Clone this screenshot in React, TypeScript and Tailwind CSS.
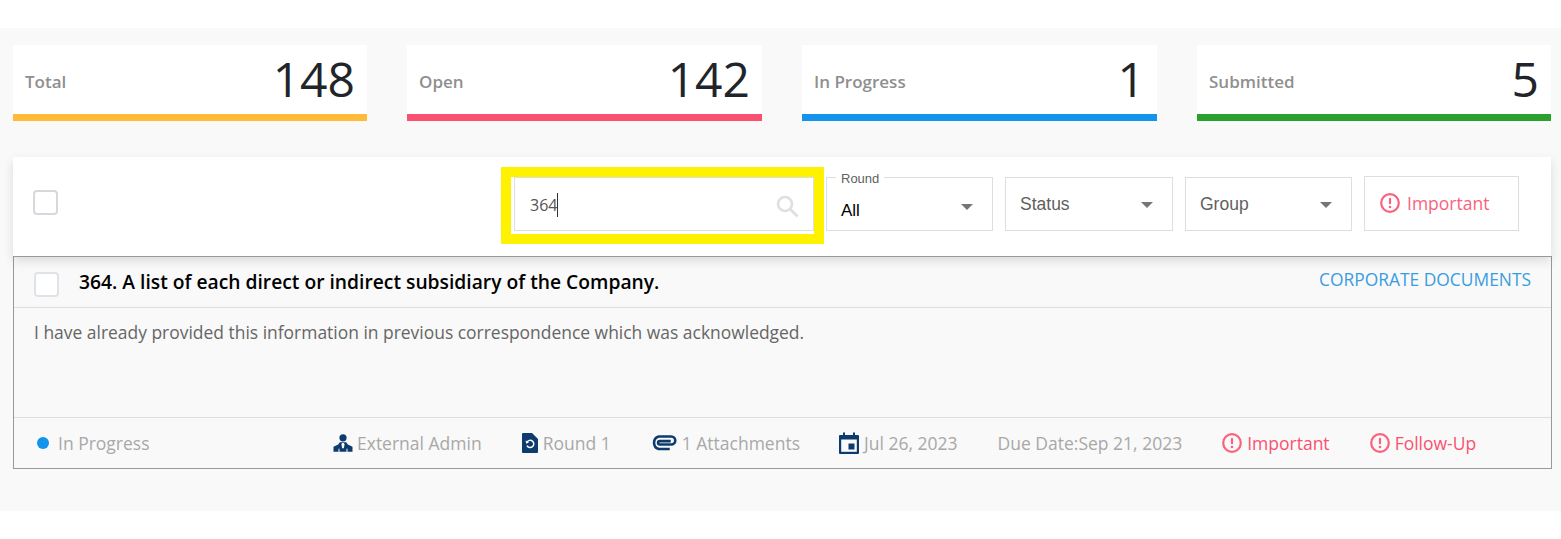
const stats = [
  { label: "Total", value: "148", bar: "border-[#ffbb38]" },
  { label: "Open", value: "142", bar: "border-[#f9516f]" },
  { label: "In Progress", value: "1", bar: "border-[#1393eb]" },
  { label: "Submitted", value: "5", bar: "border-[#2ca02c]" },
];

function Caret({ className }: { className?: string }) {
  return <span className={`w-0 h-0 border-x-[6px] border-x-transparent border-t-[6px] border-t-[#757575] ${className ?? ""}`} />;
}

function Alert({ size = 20 }: { size?: number }) {
  return (
    <svg width={size} height={size} viewBox="0 0 20 20" fill="none" className="shrink-0">
      <circle cx="10" cy="10" r="8.8" stroke="#f9627d" strokeWidth="2.2" />
      <rect x="8.9" y="4.800" width="2.2" height="6.600" rx="1.1" fill="#f9627d" />
      <circle cx="10" cy="14" r="1.3" fill="#f9627d" />
    </svg>
  );
}

function AdminIcon() {
  return (
    <svg width="20" height="18" viewBox="0 0 20 18" fill="#0d3b6e">
      <circle cx="10" cy="3.8" r="3.6" />
      <path d="M6.800 8.200h6.400l1.600 2.400 4.700 2.200v5H0.500v-5l4.700-2.200z" />
      <path d="M9 9h2l.5 1.600-.6 3.600h-1.800l-.6-3.600z" fill="#fafafa" />
      <path d="M5.500 18v-3.200h1V18zM13.500 18v-3.200h1V18z" fill="#fafafa" />
    </svg>
  );
}

function RoundIcon() {
  return (
    <svg width="16" height="20" viewBox="0 0 16 20">
      <path d="M1 0h9l6 6v13a1 1 0 0 1-1 1H1a1 1 0 0 1-1-1V1a1 1 0 0 1 1-1z" fill="#0d3b6e" />
      <path d="M5 9.200a3.600 3.600 0 1 1 0 3.400" fill="none" stroke="#fff" strokeWidth="1.5" />
      <path d="M3.600 7.600l.6 3.200 2.800-1.400z" fill="#fff" />
    </svg>
  );
}

function ClipIcon() {
  return (
    <svg width="26" height="16" viewBox="1 0 24.500 16" fill="none" stroke="#0d3b6e" strokeWidth="2.6">
      <path d="M19 14H8A6.500 6.500 0 0 1 8 1.500h12.500a4 4 0 0 1 0 8H9a1.600 1.600 0 0 1 0-3.400h11" />
    </svg>
  );
}

function CalendarIcon() {
  return (
    <svg width="20" height="22" viewBox="0 0 20 22">
      <path d="M1 3h3V0.500h2V3h8V0.500h2V3h3a1 1 0 0 1 1 1v17a1 1 0 0 1-1 1H1a1 1 0 0 1-1-1V4a1 1 0 0 1 1-1z" fill="#0d3b6e" />
      <rect x="2.200" y="7.500" width="15.600" height="12.300" fill="#fafafa" />
      <rect x="9.500" y="11.500" width="6" height="6" fill="#0d3b6e" />
    </svg>
  );
}

function Select({ label, width }: { label: string; width: string }) {
  return (
    <div className={`h-[54px] ${width} border border-[#dedede] flex items-center justify-between pl-[14px] pr-[19px] font-['Liberation_Sans',sans-serif] text-[17.5px] text-[#5f5f5f]`}>
      <span className="mt-[2px]">{label}</span>
      <Caret className="mt-[2px]" />
    </div>
  );
}

function Meta({ icon, text, className }: { icon: React.ReactNode; text: string; className?: string }) {
  return (
    <span className={`flex items-center ${className ?? ""}`}>
      {icon}
      {text}
    </span>
  );
}

export default function App() {
  return (
    <div className="h-[539px] bg-white pt-[28px] font-['Open_Sans',sans-serif] overflow-hidden">
      <div className="h-[483px] bg-[#f9f9f9] pt-[17px] pl-[13px] pr-[10px]">
        <div className="grid grid-cols-[354px_355px_355px_354px] gap-[40px]">
          {stats.map((s) => (
            <div key={s.label} className={`h-[76px] bg-white border-b-[7px] ${s.bar} flex items-center justify-between pl-[12px] pr-[12px]`}>
              <span className="text-[17px] font-semibold text-[#8f8f8f] mt-[5px]">{s.label}</span>
              <span className="text-[48px] leading-none text-[#212529] -mt-[2px]">{s.value}</span>
            </div>
          ))}
        </div>

        <div className="relative z-10 mt-[36px] h-[100px] bg-white border-b border-[#999] shadow-[0_4px_10px_rgba(0,0,0,0.12)] flex items-center pl-[20px] pr-[32px]">
          <span className="w-[25px] h-[25px] -mt-[8px] rounded-[4px] border-2 border-[#d5d9de] bg-white" />
          <div className="ml-auto flex items-center">
            <div className="w-[323px] h-[77px] border-[10px] border-[#fff200] bg-white -mr-[1px] pl-[3px] -mt-[2px]">
              <div className="w-[300px] h-[54px] border border-[#dedede] flex items-center justify-between pl-[15px] pr-[14px]">
                <span className="mt-[2px] text-[16px] text-[#555] border-r border-[#333] leading-[24px]">364</span>
                <svg width="24" height="24" viewBox="0 0 24 24" fill="none" stroke="#dfdfdf" strokeWidth="2.6" className="mt-[3px]">
                  <circle cx="10" cy="10" r="7" />
                  <path d="M15.500 15.500l7 7" />
                </svg>
              </div>
            </div>
            <div className="relative w-[167px] h-[54px] ml-[3px] -mt-[6px] border border-[#dedede] flex items-center justify-between pl-[14px] pr-[19px] font-['Liberation_Sans',sans-serif] text-black text-[17px]">
              <span className="absolute left-[9px] -top-[6px] bg-white px-[5px] text-[13px] leading-[13px] text-[#5f5f5f]">Round</span>
              <span className="mt-[15px]">All</span>
              <Caret className="mt-[7px]" />
            </div>
            <div className="flex items-center ml-[12px] -mt-[6px] gap-[12px]">
              <Select label="Status" width="w-[168px]" />
              <Select label="Group" width="w-[167px]" />
              <div className="w-[155px] h-[55px] -mt-[1px] border border-[#dedede] flex items-center gap-[7px] pl-[15px] text-[17.5px] text-[#f9627d]">
                <Alert />
                <span>Important</span>
              </div>
            </div>
          </div>
        </div>

        <div className="relative -mt-[1px] h-[213px] w-[1539px] border border-[#999] bg-[#f9f9f9]">
          <div className="h-[51px] border-b border-[#dedede] flex items-center pl-[20px] pr-[20px]">
            <span className="w-[25px] h-[25px] mt-[5px] rounded-[4px] border-2 border-[#dfe3e8] bg-white" />
            <span className="ml-[20px] text-[19.25px] font-semibold text-black">364. A list of each direct or indirect subsidiary of the Company.</span>
            <span className="ml-auto -mt-[6px] text-[17.4px] text-[#3a9de0]">CORPORATE DOCUMENTS</span>
          </div>
          <div className="h-[110px] border-b border-[#dedede] pl-[20px] pt-[11px] text-[17.45px] leading-[26px] text-[#666]">
            I have already provided this information in previous correspondence which was acknowledged.
          </div>
          <div className="h-[50px] flex items-center pl-[23px] text-[17.5px] text-[#a8a8a8]">
            <span className="w-[12px] h-[12px] rounded-full bg-[#1393eb]" />
            <span className="ml-[9px] w-[275px]">In Progress</span>
            <Meta icon={<AdminIcon />} text="External Admin" className="gap-[4px]" />
            <Meta icon={<RoundIcon />} text="Round 1" className="ml-[40px] gap-[5px]" />
            <Meta icon={<ClipIcon />} text="1 Attachments" className="ml-[40px] gap-[5px]" />
            <Meta icon={<CalendarIcon />} text="Jul 26, 2023" className="ml-[39px] gap-[5px]" />
            <span className="ml-[40px]">Due Date:Sep 21, 2023</span>
            <Meta icon={<Alert />} text="Important" className="ml-[40px] gap-[5px] text-[#f9516f]" />
            <Meta icon={<Alert />} text="Follow-Up" className="ml-[40px] gap-[5px] text-[#f9516f]" />
          </div>
        </div>
      </div>
    </div>
  );
}
